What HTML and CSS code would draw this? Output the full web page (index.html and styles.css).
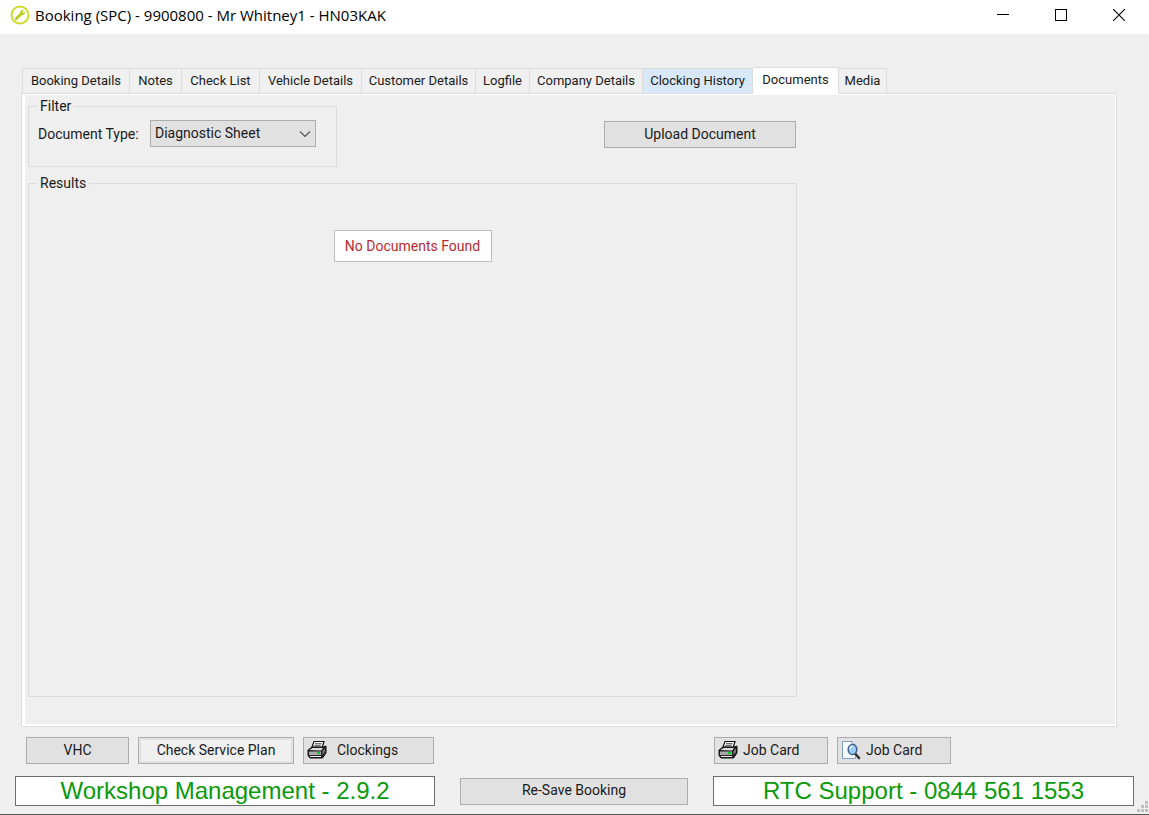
FILE: index.html
```
<!DOCTYPE html>
<html lang="en">
<head>
    <meta charset="UTF-8">
    <title>Booking (SPC) - 9900800 - Mr Whitney1 - HN03KAK</title>
    <link rel="stylesheet" href="styles.css">
</head>
<body>

<header class="title-bar">
    <svg class="app-icon" width="20" height="20" viewBox="0 0 20 20">
        <circle cx="10" cy="10" r="8.5" fill="#fff" stroke="#cfdc2e" stroke-width="2"/>
        <path d="M6.2 13.8 L11.5 8.5" stroke="#bccb1c" stroke-width="2.8" stroke-linecap="round"/>
        <path d="M10 9.500 C9.300 6.500 11.500 4.600 14 5.200 L12 7.200 L13 8.200 L15 6.200 C15.300 9 13.300 10.800 10.800 10.200 Z" fill="#bccb1c"/>
    </svg>
    <h1>Booking (SPC) - 9900800 - Mr Whitney1 - HN03KAK</h1>
    <div class="window-buttons">
        <button type="button" aria-label="Minimise">
            <svg width="12" height="12" viewBox="0 0 12 12"><path d="M0 5.500H12" stroke="#000"/></svg>
        </button>
        <button type="button" aria-label="Maximise">
            <svg width="12" height="12" viewBox="0 0 12 12"><rect x=".5" y=".5" width="11" height="11" fill="none" stroke="#000"/></svg>
        </button>
        <button type="button" aria-label="Close">
            <svg width="12" height="12" viewBox="0 0 12 12"><path d="M0 0L12 12M12 0L0 12" stroke="#000" stroke-width="1.100"/></svg>
        </button>
    </div>
</header>

<main>
    <div class="tabs" role="tablist">
        <button type="button" role="tab">Booking Details</button>
        <button type="button" role="tab">Notes</button>
        <button type="button" role="tab">Check List</button>
        <button type="button" role="tab">Vehicle Details</button>
        <button type="button" role="tab">Customer Details</button>
        <button type="button" role="tab">Logfile</button>
        <button type="button" role="tab">Company Details</button>
        <button type="button" role="tab" class="hover">Clocking History</button>
        <button type="button" role="tab" class="active" aria-selected="true">Documents</button>
        <button type="button" role="tab">Media</button>
    </div>

    <section class="panel" role="tabpanel">
        <div class="content">
            <div class="top-row">
                <fieldset class="filter">
                    <legend>Filter</legend>
                    <div class="field">
                        <label for="doc-type">Document Type:</label>
                        <div class="select-box">
                            <select id="doc-type">
                                <option>Diagnostic Sheet</option>
                            </select>
                            <svg class="chevron" width="12" height="8" viewBox="0 0 12 8"><path d="M1 1.500L6 6.500L11 1.500" fill="none" stroke="#555" stroke-width="1.200"/></svg>
                        </div>
                    </div>
                </fieldset>
                <button type="button" class="btn upload">Upload Document</button>
            </div>

            <fieldset class="results">
                <legend>Results</legend>
                <p class="message">No Documents Found</p>
            </fieldset>
        </div>
    </section>
</main>

<footer>
    <div class="buttons left">
        <button type="button" class="btn vhc">VHC</button>
        <button type="button" class="btn plan">Check Service Plan</button>
        <button type="button" class="btn clockings">
            <svg width="20" height="20" viewBox="0 0 20 20">
                <path d="M5 7L7 1.500H17L15 8Z" fill="#fff" stroke="#111" stroke-width="1.200"/>
                <path d="M8 3.800H14.500M7.300 5.800H13.700" stroke="#333"/>
                <path d="M1 10L5 7H16L19 6V13L15.500 18H3L1 15.500Z" fill="#222" stroke="#111"/>
                <path d="M2.500 10L5.500 8H16L14 10.500Z" fill="#ddd"/>
                <path d="M2 11.500H14V15H2Z" fill="#aaa"/>
                <path d="M3 16.500H14" stroke="#eee"/>
                <path d="M15.500 11L18 8.500V12L15.500 15Z" fill="#777"/>
                <rect x="10" y="12" width="3" height="2" fill="#0c2"/>
            </svg>
            <span>Clockings</span>
        </button>
    </div>

    <div class="buttons right">
        <button type="button" class="btn card">
            <svg width="20" height="20" viewBox="0 0 20 20">
                <path d="M5 7L7 1.500H17L15 8Z" fill="#fff" stroke="#111" stroke-width="1.200"/>
                <path d="M8 3.800H14.500M7.300 5.800H13.700" stroke="#333"/>
                <path d="M1 10L5 7H16L19 6V13L15.500 18H3L1 15.500Z" fill="#222" stroke="#111"/>
                <path d="M2.500 10L5.500 8H16L14 10.500Z" fill="#ddd"/>
                <path d="M2 11.500H14V15H2Z" fill="#aaa"/>
                <path d="M3 16.500H14" stroke="#eee"/>
                <path d="M15.500 11L18 8.500V12L15.500 15Z" fill="#777"/>
                <rect x="10" y="12" width="3" height="2" fill="#0c2"/>
            </svg>
            <span>Job Card</span>
        </button>
        <button type="button" class="btn card">
            <svg width="20" height="20" viewBox="0 0 20 20">
                <path d="M1.500 1.500H11L14.500 5V18.500H1.500Z" fill="#f8fbff" stroke="#7f9fc8"/>
                <path d="M11 1.500V5H14.500" fill="#dce8f8" stroke="#7f9fc8"/>
                <path d="M14 13.500L18 18" stroke="#333" stroke-width="2.600" stroke-linecap="round"/>
                <ellipse cx="11.500" cy="9.500" rx="4.300" ry="5" fill="#9ccbf5" stroke="#3d5f8c" stroke-width="1.500"/>
                <path d="M9 9C9 7 10.500 6 12 6.500" fill="none" stroke="#e6f5ff" stroke-width="1.500"/>
            </svg>
            <span>Job Card</span>
        </button>
    </div>

    <div class="status">Workshop Management - 2.9.2</div>
    <button type="button" class="btn resave">Re-Save Booking</button>
    <div class="status">RTC Support - 0844 561 1553</div>
</footer>

<svg class="grip" width="11" height="11" viewBox="0 0 11 11">
    <path d="M8 0h3v3h-3zM4 4h3v3h-3zM8 4h3v3h-3zM0 8h3v3h-3zM4 8h3v3h-3zM8 8h3v3h-3z" fill="#bfbfbf"/>
</svg>

</body>
</html>
```
FILE: styles.css
```
* {
    box-sizing: border-box;
}
body {
    margin: 0;
    min-height: 100vh;
    display: flex;
    flex-direction: column;
    position: relative;
    background: #efefef;
    border-bottom: 1px solid #555;
    color: #1a1a1a;
    font-family: Roboto, "Liberation Sans", sans-serif;
    font-size: 14px;
    line-height: 16px;
}
button, select {
    font: inherit;
    color: inherit;
    margin: 0;
}

/* title bar */
.title-bar {
    display: flex;
    align-items: center;
    height: 34px;
    padding: 0 1px 4px 10px;
    background: #fff;
}
.title-bar h1 {
    margin: 0 auto 0 5px;
    color: #000;
    font-family: "Open Sans", sans-serif;
    font-size: 15px;
    font-weight: normal;
    line-height: 20px;
}
.window-buttons {
    display: flex;
}
.window-buttons button {
    display: flex;
    align-items: center;
    justify-content: center;
    width: 58px;
    height: 30px;
    padding: 0;
    border: 0;
    background: none;
}

/* tabs */
main {
    flex: 1;
    display: flex;
    flex-direction: column;
    padding: 33px 32px 0 21px;
}
.tabs {
    display: grid;
    grid-template-columns: 108px 52px 78px 102px 114px 54px 113px 110px 86px 48px;
    align-items: end;
    padding-left: 1px;
}
.tabs button {
    height: 25px;
    padding: 0;
    border: 1px solid #dcdcdc;
    border-width: 1px 1px 0 0;
    background: #f0f0f0;
    font-size: 13px;
    text-align: center;
    white-space: nowrap;
}
.tabs button:first-child {
    border-left-width: 1px;
}
.tabs .hover {
    background: #d8e8f8;
}
.tabs .active {
    position: relative;
    height: 27px;
    margin-bottom: -1px;
    padding-bottom: 3px;
    background: #fff;
}
.panel {
    flex: 1;
    display: flex;
    border: 1px solid #dcdcdc;
}
.content {
    flex: 1;
    display: flex;
    flex-direction: column;
    padding: 3px 3px 27px;
    border: solid #fff;
    border-width: 1px 1px 2px 3px;
}

/* filter and results */
fieldset {
    min-width: 0;
    margin: 0;
    border: 1px solid #dcdcdc;
}
legend {
    padding: 0 3px;
}
.top-row {
    display: flex;
    justify-content: space-between;
    max-width: 768px;
}
.filter {
    width: 309px;
    height: 69px;
    padding: 6px 9px;
}
.filter legend, .results legend {
    margin-left: -1px;
}
.field {
    display: flex;
    align-items: center;
    justify-content: space-between;
    padding-right: 11px;
}
.select-box {
    position: relative;
}
.select-box select {
    display: block;
    width: 166px;
    height: 27px;
    padding: 0 4px 1px;
    border: 1px solid #adadad;
    border-radius: 0;
    background: #e1e1e1;
    appearance: none;
}
.chevron {
    position: absolute;
    top: 10px;
    right: 5px;
    pointer-events: none;
}
.upload {
    width: 192px;
    margin-top: 23px;
}
.results {
    flex: 1;
    max-width: 769px;
    margin-top: 8px;
    padding: 39px 9px;
}
.message {
    width: 158px;
    margin: 0 auto;
    padding: 7px 0;
    border: 1px solid #bdbdbd;
    background: #fff;
    color: #b82a30;
    text-align: center;
}

/* bottom buttons */
.btn {
    display: flex;
    align-items: center;
    justify-content: center;
    height: 27px;
    padding: 0 3px 2px;
    border: 1px solid #adadad;
    background: #e1e1e1;
    white-space: nowrap;
}
footer {
    display: grid;
    grid-template-columns: 420fr 228fr 421fr;
    column-gap: 25px;
    row-gap: 12px;
    align-items: center;
    padding: 10px 15px 8px;
}
.buttons {
    display: flex;
    gap: 9px;
}
.left {
    grid-column: 1 / 3;
    padding-left: 11px;
}
.right {
    padding-left: 1px;
}
.vhc {
    width: 103px;
}
.plan {
    width: 156px;
    background: #f0f0f0;
    box-shadow: inset 0 0 0 2px #e1e1e1;
}
.clockings {
    justify-content: flex-start;
    gap: 10px;
    width: 131px;
}
.card {
    justify-content: flex-start;
    gap: 5px;
    width: 114px;
}
.status {
    height: 30px;
    border: 1px solid #6e6e6e;
    background: #fff;
    color: #0a9a0a;
    font-family: "Liberation Sans", sans-serif;
    font-size: 24px;
    line-height: 28px;
    text-align: center;
    white-space: nowrap;
}
.grip {
    position: absolute;
    right: 1px;
    bottom: 2px;
}
```
